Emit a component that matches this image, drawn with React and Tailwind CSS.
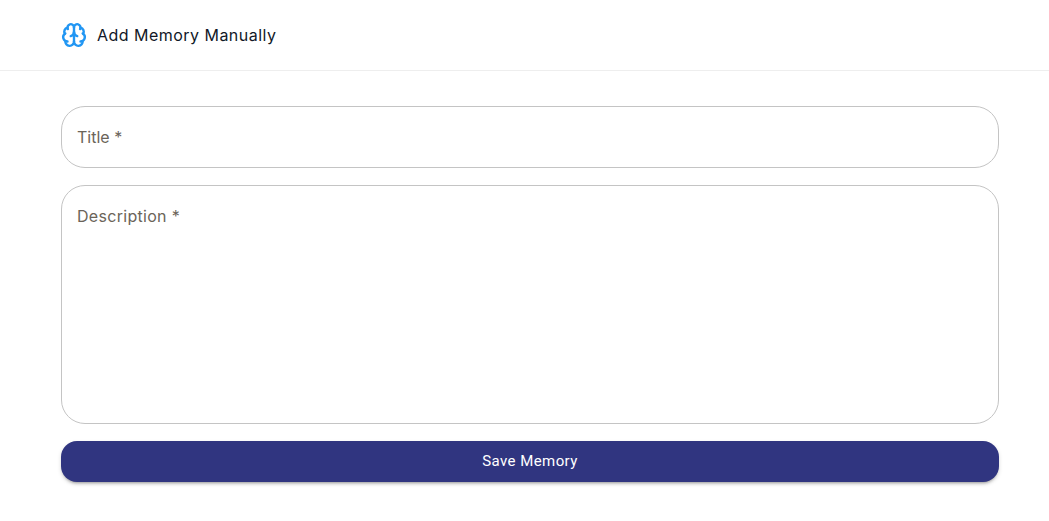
import { Brain } from "lucide-react";

export default function App() {
  return (
    <div className="min-h-[521px] bg-white font-['Inter',sans-serif]">
      <header className="flex h-[71px] items-center gap-[10px] border-b border-[#eeeeee] px-[61px]">
        <Brain size={26} strokeWidth={2.2} className="text-[#2196f3]" />
        <h1 className="text-base font-normal tracking-[0.47px] text-[#111827]">Add Memory Manually</h1>
      </header>
      <form className="flex flex-col gap-[17px] pl-[61px] pr-[50px] pt-[35px]">
        <input
          className="h-[62px] w-full rounded-[24px] border border-[#c4c4c4] px-[15px] text-base outline-none placeholder:text-[#6b6459]"
          placeholder="Title *"
        />
        <textarea
          className="h-[239px] w-full resize-none rounded-[24px] border border-[#c4c4c4] px-[15px] py-[18px] text-base leading-[24px] tracking-[0.3px] outline-none placeholder:text-[#6b6459]"
          placeholder="Description *"
        />
        <button
          type="button"
          className="h-[41px] w-full rounded-[16px] bg-[#303580] font-['Roboto',sans-serif] text-[15px] tracking-[0.43px] text-white shadow-[0_3px_3px_-2px_rgba(0,0,0,0.3),0_2px_4px_0_rgba(0,0,0,0.14)]"
        >
          Save Memory
        </button>
      </form>
    </div>
  );
}
